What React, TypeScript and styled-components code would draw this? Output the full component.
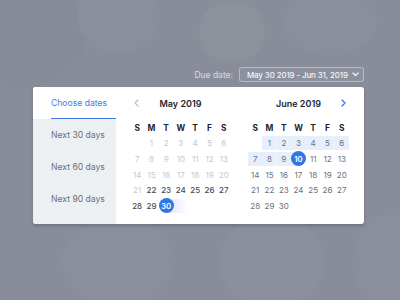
import React from "react";
import styled, { createGlobalStyle } from "styled-components";

const Global = createGlobalStyle`
  html, body {
    margin: 0;
    padding: 0;
    width: 400px;
    height: 300px;
    overflow: hidden;
  }
  body {
    font-family: Inter, "Open Sans", sans-serif;
    background-color: #898d99;
    background-image:
      radial-gradient(ellipse 34px 32px at 232px 32px, #8d919c 94%, transparent 100%),
      radial-gradient(ellipse 42px 38px at 118px 16px, #8b8f9b 94%, transparent 100%),
      radial-gradient(ellipse 48px 34px at 330px 22px, #8b8f9b 94%, transparent 100%),
      radial-gradient(ellipse 58px 46px at 118px 262px, #8b8f9b 94%, transparent 100%),
      radial-gradient(ellipse 54px 48px at 272px 262px, #8c909c 94%, transparent 100%),
      radial-gradient(ellipse 40px 50px at 392px 262px, #8b8f9b 94%, transparent 100%),
      radial-gradient(ellipse 70px 60px at 20px 30px, #878b97 94%, transparent 100%);
  }
`;

const Page = styled.div`
  padding: 67px 0 0 33px;
  width: 331px;
  display: flex;
  flex-direction: column;
  gap: 5px;
`;

const TopBar = styled.div`
  display: flex;
  justify-content: flex-end;
  align-items: center;
  gap: 6px;
  height: 15px;
`;

const DueLabel = styled.span`
  font-size: 8.5px;
  color: #d9dbe1;
  white-space: nowrap;
`;

const RangeButton = styled.button`
  box-sizing: border-box;
  height: 15px;
  width: 125px;
  flex-shrink: 0;
  padding: 0 9px 0 7px;
  display: flex;
  align-items: center;
  justify-content: space-between;
  gap: 4px;
  border: 1px solid rgba(255, 255, 255, 0.38);
  border-radius: 3px;
  background: rgba(255, 255, 255, 0.04);
  color: #f4f5f8;
  font-family: inherit;
  font-size: 7.9px;
  font-weight: 500;
  white-space: nowrap;
  letter-spacing: -0.1px;
  cursor: pointer;
`;

const Card = styled.div`
  display: flex;
  height: 137px;
  background: #ffffff;
  border-radius: 3px;
  box-shadow: 0 2px 3px rgba(40, 44, 56, 0.25);
  overflow: hidden;
`;

const Sidebar = styled.div`
  width: 83px;
  flex-shrink: 0;
  background: #edf0f3;
  display: flex;
  flex-direction: column;
`;

const Option = styled.div<{ $active?: boolean }>`
  height: 32px;
  flex-shrink: 0;
  box-sizing: border-box;
  display: flex;
  align-items: center;
  padding-left: 18px;
  font-size: 8.6px;
  color: ${(p) => (p.$active ? "#3d7be0" : "#6a6f7a")};
  background: ${(p) => (p.$active ? "#ffffff" : "transparent")};
  position: relative;
  ${(p) =>
    p.$active &&
    `
    &::after {
      content: "";
      position: absolute;
      left: 18px;
      right: 0;
      bottom: 0;
      height: 1px;
      background: #3d7be0;
    }
  `}
`;

const Calendars = styled.div`
  display: flex;
  gap: 17px;
  padding: 9px 15px 0 14px;
`;

const Month = styled.div`
  width: 101px;
  display: flex;
  flex-direction: column;
  gap: 10px;
`;

const TitleRow = styled.div`
  height: 14px;
  display: flex;
  align-items: center;
  justify-content: space-between;
`;

const ArrowSlot = styled.div`
  width: 12px;
  display: flex;
  justify-content: center;
  align-items: center;
`;

const Title = styled.div`
  font-size: 9px;
  font-weight: 600;
  color: #1f2331;
`;

const Grid = styled.div`
  display: grid;
  grid-template-columns: repeat(7, 1fr);
  grid-auto-rows: 15.6px;
`;

const Head = styled.div`
  display: flex;
  align-items: center;
  justify-content: center;
  font-size: 8.4px;
  font-weight: 700;
  color: #1d2130;
`;

type Band = "none" | "mid" | "left" | "right" | "fade";
type Tone = "faded" | "dark" | "mid";

const bandBg = (b: Band) => {
  const c = "#e8effc";
  switch (b) {
    case "mid":
      return `linear-gradient(${c}, ${c})`;
    case "left":
      return `linear-gradient(to right, ${c} 50%, transparent 50%)`;
    case "right":
      return `linear-gradient(to right, transparent 50%, ${c} 50%)`;
    case "fade":
      return `linear-gradient(to right, ${c}, rgba(232,239,252,0))`;
    default:
      return "none";
  }
};

const Cell = styled.div<{ $band: Band; $tone: Tone }>`
  display: flex;
  align-items: center;
  justify-content: center;
  font-size: 8px;
  font-weight: ${(p) => (p.$tone === "dark" ? 500 : 400)};
  color: ${(p) =>
    p.$tone === "faded" ? "#c5c8cf" : p.$tone === "dark" ? "#464a56" : "#6b707c"};
  background-image: ${(p) => bandBg(p.$band)};
  background-repeat: no-repeat;
  background-size: 100% 14px;
  background-position: center;
`;

const Selected = styled.span`
  width: 15px;
  height: 15px;
  border-radius: 50%;
  background: #2f77e4;
  color: #ffffff;
  font-weight: 600;
  font-size: 7.8px;
  display: flex;
  align-items: center;
  justify-content: center;
`;

const Chevron = ({ dir, color }: { dir: "left" | "right" | "down"; color: string }) => {
  const pts =
    dir === "left" ? "4,1 1,4 4,7" : dir === "right" ? "1,1 4,4 1,7" : "1,1 3.5,3.5 6,1";
  const w = dir === "down" ? 7 : 5;
  const h = dir === "down" ? 5 : 8;
  return (
    <svg width={w} height={h} viewBox={`0 0 ${w} ${h}`} style={{ flexShrink: 0 }}>
      <polyline points={pts} fill="none" stroke={color} strokeWidth="1.2" strokeLinecap="round" strokeLinejoin="round" />
    </svg>
  );
};

type Day = { n?: number; band?: Band; tone?: Tone; sel?: boolean };

const HEADS = ["S", "M", "T", "W", "T", "F", "S"];

const mayDays: Day[] = [
  {},
  ...Array.from({ length: 30 }, (_, i): Day => {
    const n = i + 1;
    if (n === 30) return { n, sel: true, band: "right" };
    return { n, tone: n <= 21 ? "faded" : "dark" };
  }),
  { band: "fade" },
];

const juneDays: Day[] = [
  {},
  ...Array.from({ length: 30 }, (_, i): Day => {
    const n = i + 1;
    if (n === 10) return { n, sel: true, band: "left" };
    if (n < 10) return { n, tone: "mid", band: "mid" };
    return { n, tone: "mid" };
  }),
];

const MonthView = ({
  title,
  days,
  prev,
  next,
}: {
  title: string;
  days: Day[];
  prev?: boolean;
  next?: boolean;
}) => (
  <Month>
    <TitleRow>
      <ArrowSlot>{prev && <Chevron dir="left" color="#b9bdc6" />}</ArrowSlot>
      <Title>{title}</Title>
      <ArrowSlot>{next && <Chevron dir="right" color="#2f6fe0" />}</ArrowSlot>
    </TitleRow>
    <Grid>
      {HEADS.map((h, i) => (
        <Head key={`h${i}`}>{h}</Head>
      ))}
      {days.map((d, i) => (
        <Cell key={i} $band={d.band ?? "none"} $tone={d.tone ?? "mid"}>
          {d.sel ? <Selected>{d.n}</Selected> : d.n}
        </Cell>
      ))}
    </Grid>
  </Month>
);

export default function App() {
  return (
    <>
      <Global />
      <Page>
        <TopBar>
          <DueLabel>Due date:</DueLabel>
          <RangeButton>
            <span>May 30 2019 - Jun 31, 2019</span>
            <Chevron dir="down" color="#f4f5f8" />
          </RangeButton>
        </TopBar>
        <Card>
          <Sidebar>
            <Option $active>Choose dates</Option>
            <Option>Next 30 days</Option>
            <Option>Next 60 days</Option>
            <Option>Next 90 days</Option>
          </Sidebar>
          <Calendars>
            <MonthView title="May 2019" days={mayDays} prev />
            <MonthView title="June 2019" days={juneDays} next />
          </Calendars>
        </Card>
      </Page>
    </>
  );
}
